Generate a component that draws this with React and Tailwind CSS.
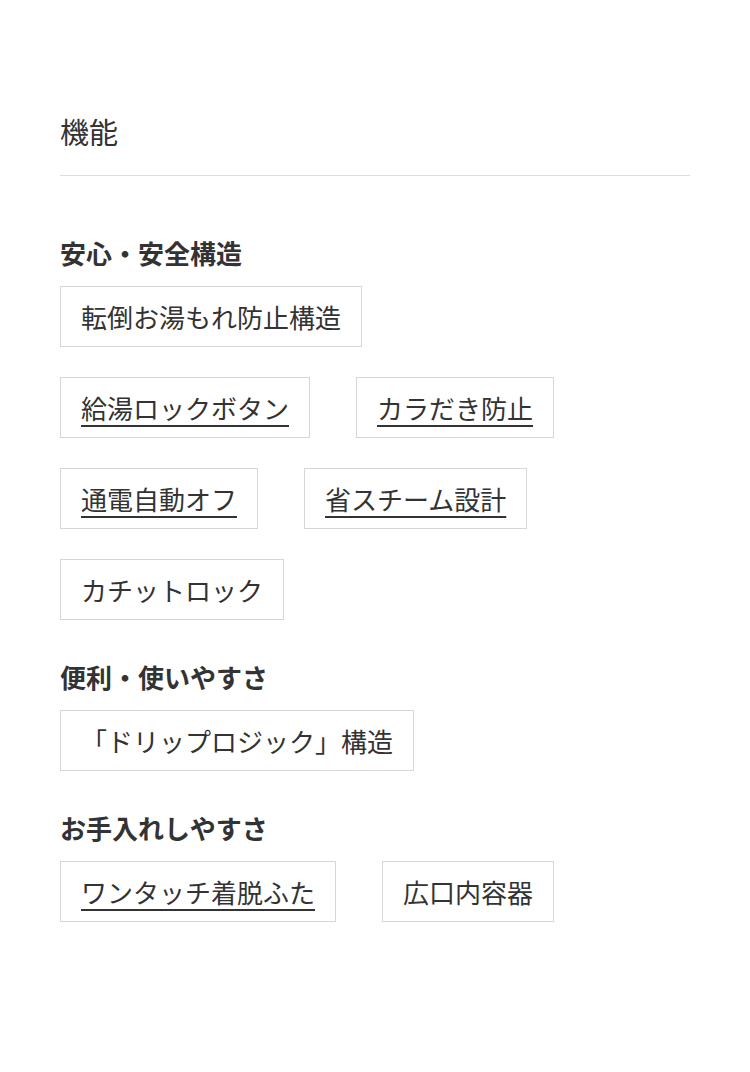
const sections = [
  {
    title: "安心・安全構造",
    tags: [
      { label: "転倒お湯もれ防止構造" },
      { label: "給湯ロックボタン", link: true },
      { label: "カラだき防止", link: true },
      { label: "通電自動オフ", link: true },
      { label: "省スチーム設計", link: true },
      { label: "カチットロック" },
    ],
  },
  {
    title: "便利・使いやすさ",
    tags: [{ label: "「ドリップロジック」構造" }],
  },
  {
    title: "お手入れしやすさ",
    tags: [{ label: "ワンタッチ着脱ふた", link: true }, { label: "広口内容器" }],
  },
];

function Tag({ label, link }) {
  return (
    <span className="flex h-[61px] items-center border border-[#d6d6d6] px-5 text-[26px] leading-none text-[#333]">
      <span className={link ? "underline decoration-2 underline-offset-[6px]" : ""}>{label}</span>
    </span>
  );
}

export default function App() {
  return (
    <div
      className="min-h-[1072px] bg-white px-[60px] pt-[109px] text-[#333]"
      style={{ fontFamily: '"Noto Sans CJK JP", "Noto Sans", sans-serif' }}
    >
      <h2 className="text-[29px] leading-[44px]">機能</h2>
      <div className="mt-[22px] h-px w-[630px] bg-[#dcdcdc]" />

      <div className="mt-[59px]">
        {sections.map((s, i) => (
          <div key={s.title} className={i > 0 ? "mt-[39px]" : ""}>
            <h3 className="text-[26px] font-bold leading-[36px]">{s.title}</h3>
            <div className="mt-[15px] flex flex-wrap gap-x-[46px] gap-y-[30px]">
              {s.tags.map((t, j) => (
                <div key={t.label} className={i === 0 && j === 0 ? "basis-full flex" : "flex"}>
                  <Tag {...t} />
                </div>
              ))}
            </div>
          </div>
        ))}
      </div>
    </div>
  );
}
